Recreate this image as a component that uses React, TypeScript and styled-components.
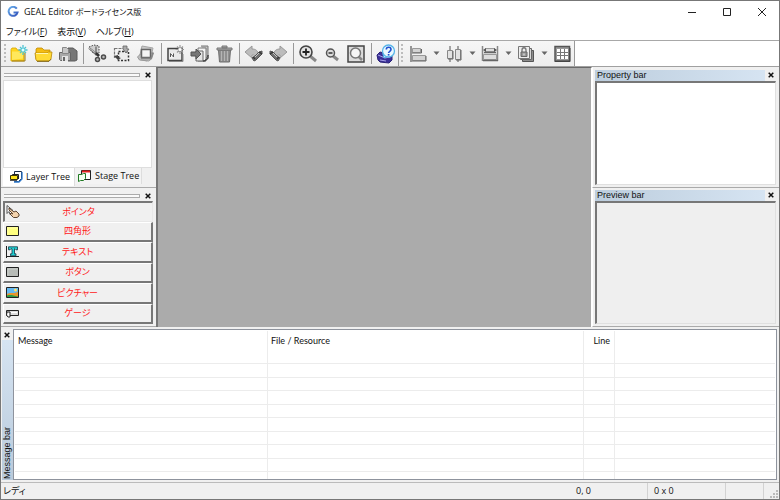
import React from "react";
import styled, { createGlobalStyle, css } from "styled-components";

const ui = `"Open Sans", "Noto Sans CJK JP", sans-serif`;
const caption = `"Liberation Sans", "Noto Sans CJK JP", sans-serif`;
const list = `Lato, "Noto Sans CJK JP", sans-serif`;

const GlobalStyle = createGlobalStyle`
  * { box-sizing: border-box; }
  body { margin: 0; background: #fff; }
  button { margin: 0; padding: 0; border: 0; background: none; color: inherit; font: inherit; }
  svg { display: block; flex: none; }
`;

const Frame = styled.div`
  display: flex;
  flex-direction: column;
  height: 100vh;
  border: 1px solid #777;
  background: #f0f0f0;
  color: #111;
  font-family: ${ui};
  font-size: 9px;
  line-height: 14px;
  font-feature-settings: "palt";
  overflow: hidden;
`;

const TitleBar = styled.header`
  display: flex;
  align-items: center;
  height: 22px;
  padding-left: 6px;
  gap: 5px;
  background: #fff;
`;

const Title = styled.h1`
  flex: 1;
  margin: 0;
  font-size: 9px;
  font-weight: 400;
`;

const Kana = styled.span`
  font-size: 8px;
`;

const ControlGroup = styled.div`
  display: flex;
`;

const WindowButton = styled.button`
  display: grid;
  place-items: center;
  width: 35px;
  height: 22px;
`;

const MenuBar = styled.nav`
  display: flex;
  gap: 10px;
  height: 18px;
  padding-left: 5px;
  background: #fff;
  border-bottom: 1px solid #a8a8a8;
`;

const MenuItem = styled.button`
  height: 17px;
`;

const ToolRow = styled.div`
  display: flex;
  height: 26px;
  background: #fff;
  border-bottom: 1px solid #a0a0a0;
`;

const ToolBar = styled.div`
  display: flex;
  align-items: center;
  padding-left: 7px;
  background: linear-gradient(#f6f6f6, #ededed);
  border-right: 1px solid #999;

  & + & { padding-left: 0; }
`;

const Grip = styled.span`
  width: 2px;
  height: 20px;
  margin: 0 3px 0 2px;
  background: repeating-linear-gradient(#bcbcbc 0 2px, transparent 2px 4px);
`;

const FirstGrip = styled(Grip)`
  margin: 0 2px 0 -4px;
`;

const ToolButton = styled.button`
  display: grid;
  place-items: center;
  width: 24px;
  height: 24px;
`;

const DropButton = styled(ToolButton)`
  width: 12px;
`;

const Separator = styled.span`
  width: 6px;
  height: 21px;
  background: linear-gradient(#999, #999) center / 1px 100% no-repeat;
`;

const Workspace = styled.div`
  display: grid;
  grid-template-columns: 155px 1fr 187px;
  flex: 1;
  min-height: 0;
`;

const Column = styled.aside`
  display: flex;
  flex-direction: column;
  min-height: 0;
`;

const Canvas = styled.main`
  background: #ababab;
  border-top: 1px solid #696969;
  border-left: 2px solid #777;
  border-right: 1px solid #fff;
`;

const LeftPane = styled.section<{ $grow?: boolean }>`
  display: flex;
  flex-direction: column;
  padding: 2px 3px 1px 2px;
  border-bottom: 1px solid #aaa;
  ${(p) => (p.$grow ? css`flex: 1; min-height: 0;` : css`height: 121px;`)}
`;

const GripHeader = styled.div`
  display: flex;
  align-items: center;
  gap: 2px;
  height: 11px;
`;

const DragBar = styled.span`
  flex: 1;
  height: 4px;
  margin-left: 1px;
  border: 1px solid #ababab;
  border-left: 0;
  background: #fafafa;
`;

const CloseButton = styled.button`
  display: grid;
  place-items: center;
  width: 11px;
  height: 11px;
`;

const TreeBox = styled.div`
  flex: 1;
  margin-right: 1px;
  background: #fff;
  border: 1px solid #dedede;
`;

const Tabs = styled.div`
  display: flex;
  align-items: flex-start;
`;

const Tab = styled.button<{ $active?: boolean }>`
  display: flex;
  align-items: center;
  gap: 3px;
  height: ${(p) => (p.$active ? 18 : 16)}px;
  padding: 0 ${(p) => (p.$active ? 4 : 2)}px 0 ${(p) => (p.$active ? 6 : 3)}px;
  background: ${(p) => (p.$active ? "#fff" : "#f3f3f3")};
  border-right: 1px solid #ddd;
  white-space: nowrap;
`;

const PartList = styled.div`
  display: flex;
  flex-direction: column;
  flex: 1;
  padding-bottom: 1px;
`;

const PartButton = styled.button<{ $pressed?: boolean }>`
  display: grid;
  grid-template-columns: 20px 1fr 20px;
  align-items: center;
  justify-items: center;
  flex: 1;
  min-height: 0;
  color: #ff1818;
  border-style: solid;
  border-width: ${(p) => (p.$pressed ? "2px 1px 1px 2px" : "1px 2px 2px 1px")};
  border-color: ${(p) => (p.$pressed ? "#777 #e8e8e8 #e8e8e8 #777" : "#fff #777 #777 #fff")};
  background: #f0f0f0;

  svg {
    justify-self: start;
    margin-left: ${(p) => (p.$pressed ? 1 : 2)}px;
  }
`;

const DockPane = styled.section<{ $line?: boolean }>`
  display: flex;
  flex-direction: column;
  padding: 1px 3px 2px 2px;
  border-top: 1px solid ${(p) => (p.$line ? "#aaa" : "#f0f0f0")};
  border-left: 1px solid #fff;
  ${(p) => (p.$line ? css`flex: 1; min-height: 0; border-bottom: 1px solid #aaa;` : css`height: 120px;`)}
`;

const DockHeader = styled.div`
  display: flex;
  align-items: center;
  height: 12px;
`;

const DockTitle = styled.h2`
  flex: 1;
  margin: 0;
  padding-left: 2px;
  background: linear-gradient(90deg, #bccddd, #d6e4f2);
  font-family: ${caption};
  font-size: 9px;
  font-weight: 400;
  line-height: 11px;
`;

const DockBody = styled.div<{ $white?: boolean }>`
  flex: 1;
  background: ${(p) => (p.$white ? "#fff" : "#efefef")};
  border-style: solid;
  border-width: 2px 1px 1px 2px;
  border-color: #777 #e0e0e0 #e0e0e0 #777;
`;

const MessagePane = styled.section`
  display: flex;
  height: 156px;
  padding: 2px 2px 2px 0;
  border-bottom: 1px solid #bbb;
`;

const MessageSide = styled.div`
  display: flex;
  flex-direction: column;
  align-items: center;
  width: 12px;
`;

const MessageTitle = styled.h2`
  flex: 1;
  margin: 0;
  padding-top: 1px;
  background: linear-gradient(#b9cadb, #d6e4f2);
  font-family: ${caption};
  font-size: 9px;
  font-weight: 400;
  line-height: 11px;
  writing-mode: vertical-rl;
  transform: rotate(180deg);
`;

const MessageBox = styled.div`
  flex: 1;
  overflow: hidden;
  padding: 1px;
  background: #fff;
  border: 1px solid #8e939d;
`;

const MessageTable = styled.table`
  width: 100%;
  table-layout: fixed;
  border-spacing: 0;
  font-family: ${list};
  font-size: 9px;
  line-height: 12px;

  th, td {
    padding: 0 4px 0 3px;
    border-right: 1px solid #ececec;
    font-weight: 400;
    text-align: left;
  }
  th { height: 20px; }
  td { height: 14px; border-bottom: 1px solid #ececec; }
  tbody tr:nth-child(odd) td { height: 13px; }
  th:nth-child(3) { text-align: right; }
  th:last-child, td:last-child { border-right: 0; }
`;

const Col = styled.col<{ $w?: number }>`
  width: ${(p) => (p.$w ? `${p.$w}px` : "auto")};
`;

const StatusBar = styled.footer`
  display: flex;
  align-items: stretch;
  height: 16px;
  line-height: 16px;
`;

const StatusCell = styled.span<{ $w?: number }>`
  ${(p) => (p.$w ? css`width: ${p.$w}px;` : css`flex: 1;`)}
  padding-left: ${(p) => (p.$w ? 6 : 2)}px;
  border-right: ${(p) => (p.$w ? "1px solid #d2d2d2" : "0")};
`;

const ResizeGrip = styled.span`
  display: flex;
  align-items: flex-end;
  justify-content: flex-end;
  width: 15px;
  padding: 1px;
`;

const S = ({ children, size = 20 }: { children: React.ReactNode; size?: number }) => (
  <svg width={size} height={size} viewBox={`0 0 ${size} ${size}`} aria-hidden="true">{children}</svg>
);

const CloseMark = () => (
  <svg width="6" height="6" viewBox="0 0 6 6" aria-hidden="true">
    <path d="M.7.7 5.3 5.3M5.3.7.7 5.3" stroke="#111" strokeWidth="1.5" />
  </svg>
);

const NewIcon = () => (
  <S>
    <path d="M1 5.500 2 4h4l1.500 2H14v11H1z" fill="#ffd51f" stroke="#d7a400" strokeWidth=".8" />
    <path d="M2 7.500h11v7L2 16z" fill="#ffe85c" />
    <path d="M2 17h13V9" stroke="#9c7b1c" fill="none" />
    <path d="M13 1v10M8.500 6h9M10 3l6 6M16 3l-6 6" stroke="#4cc3d3" strokeWidth="1.300" />
    <circle cx="13" cy="6" r="1.500" fill="#e3ffff" />
  </S>
);

const OpenIcon = () => (
  <S>
    <path d="M2 15V5l1-1h5l2 2h6v4" fill="#f4bd12" stroke="#c18c08" strokeWidth=".8" />
    <path d="M1 9h12l1.500-1H18l-1 7-2 2H3l-1-1z" fill="#ffdb35" stroke="#b98809" strokeWidth=".8" />
    <path d="M2 9.500h12" stroke="#fff6b0" fill="none" />
    <path d="M3 17.300h12l2-2" stroke="#7d6316" fill="none" />
  </S>
);

const SaveAllIcon = () => (
  <S>
    <path d="M10 4h5l4 3v9l-2 1h-7z" fill="#777" stroke="#5c5c5c" />
    <path d="M1.500 8.500h11v8h-10l-1-1z" fill="#a9a9a9" stroke="#666" />
    <path d="M4.500 3.500h4l2 2v4h-6z" fill="#c8c8c8" stroke="#888" />
    <path d="M4 12h6v5H4z" fill="#e4e4e4" />
    <path d="M5 13h2v4H5z" fill="#666" />
  </S>
);

const CutIcon = () => (
  <S>
    <path d="m1 3 5-2 5 1v7l-3 2-4-3z" fill="#d0d0d0" stroke="#444" strokeDasharray="1.500 1.200" />
    <path d="m1 4 10 8" stroke="#666" strokeWidth="2" />
    <path d="m1 4 8 6" stroke="#e8e8e8" strokeWidth=".8" />
    <path d="M8 2.500v9" stroke="#666" strokeWidth="1.300" />
    <path d="m8 9 3 3" stroke="#333" strokeWidth="2.500" />
    <circle cx="9.500" cy="15.500" r="2" fill="#bbb" stroke="#4c4c4c" strokeWidth="1.500" />
    <circle cx="15.500" cy="13" r="2" fill="#bbb" stroke="#4c4c4c" strokeWidth="1.500" />
  </S>
);

const CopyIcon = () => (
  <S>
    <path d="M2.500 4.500h10v9h-10z" fill="#f4f4f4" stroke="#777" strokeWidth="1.200" strokeDasharray="3 1" />
    <path d="M6.500 7.500h10v9h-10z" fill="#ececec" stroke="#333" strokeWidth="1.500" strokeDasharray="2 1.500" />
    <path d="M11 2h4v3h2l-3 4-3-4z" fill="#aaa" stroke="#666" strokeWidth=".8" />
    <path d="m2 12 4-1v2l3 1-3 2z" fill="#444" />
  </S>
);

const PasteIcon = () => (
  <S>
    <path d="m6 2 11 2-2 9-4 4-8-2z" fill="#c9c9c9" stroke="#a5a5a5" />
    <path d="m1.500 13 3-3 13-1-2 6-3 2-9-1z" fill="#bdbdbd" stroke="#999" />
    <path d="M5.500 5.500h9v8h-9z" fill="#f4f4f4" stroke="#666" strokeWidth="1.500" />
    <path d="M5 14.500h10l2-6" stroke="#858585" fill="none" strokeWidth="1.500" />
  </S>
);

const StageIcon = () => (
  <S>
    <path d="M2 4.500h14v12H2z" fill="#e9e9e9" stroke="#444" strokeWidth="1.500" />
    <path d="M3 17.500h14V10" stroke="#888" fill="none" />
    <path d="M4 9.500h3v4H4z" fill="#fff" />
    <path d="M4.500 13V9.500l3 3.500V9.500" stroke="#555" fill="none" />
    <path d="M14 1v9M9.500 5.500h8.500M11 2.500l6 6M17 2.500l-6 6" stroke="#999" strokeWidth="1.200" />
    <circle cx="14" cy="5.500" r="1.500" fill="#fff" />
  </S>
);

const ImportIcon = () => (
  <S>
    <path d="M11 2h7v10l-2 2" fill="#c4c4c4" stroke="#777" />
    <path d="M8 4h8v11l-2 2H8z" fill="#f4f4f4" stroke="#777" />
    <path d="M6 7h7v10H6z" fill="#e4e4e4" stroke="#666" />
    <path d="M13 17h2l3-3v-3" stroke="#444" fill="none" strokeWidth="1.500" />
    <path d="M1 8h5V5l5 5-5 5v-3H1z" fill="#777" stroke="#555" />
  </S>
);

const TrashIcon = () => (
  <S>
    <path d="M4.500 6h12l-1 12h-10z" fill="#909090" stroke="#6c6c6c" />
    <path d="M3 4h15v2H3zM8 2h5v2H8z" fill="#aaa" stroke="#777" />
    <path d="M7.500 7v10M10.500 7v10M13.500 7v10" stroke="#b5b5b5" />
  </S>
);

const UndoIcon = ({ redo = false }: { redo?: boolean }) => (
  <S>
    <g transform={redo ? "translate(20 0) scale(-1 1)" : undefined}>
      <path d="m1 8 7-6v3c4 0 6 2 6 5l-3 3c0-2-1-2-3-2v3z" fill="#bcbcbc" stroke="#999" />
      <path d="m8 14 2 3 2-1 6-6V7l-3 1-4 4z" fill="#707070" stroke="#555" />
      <path d="m9 13 2 2M15 8l3 2" stroke="#333" strokeWidth="1.300" />
      <path d="m11 13 4-4" stroke="#c5c5c5" />
    </g>
  </S>
);

const ZoomIcon = ({ small = false }: { small?: boolean }) => (
  <S>
    {small ? (
      <>
        <path d="m11 12 5 4" stroke="#888" strokeWidth="3" />
        <circle cx="8.500" cy="9" r="4" fill="#ddd" stroke="#555" strokeWidth="1.500" />
        <path d="M6.500 9h4" stroke="#333" strokeWidth="1.500" />
      </>
    ) : (
      <>
        <path d="m12 12 6 5" stroke="#888" strokeWidth="3" />
        <circle cx="8" cy="8" r="6" fill="#e3e3e3" stroke="#444" strokeWidth="1.600" />
        <path d="M4.500 8h7M8 4.500v7" stroke="#222" strokeWidth="1.800" />
      </>
    )}
  </S>
);

const FitIcon = () => (
  <S>
    <path d="M2 2h16v16H2z" fill="#dcdcdc" stroke="#444" strokeWidth="1.500" />
    <path d="m12 12 4 4" stroke="#888" strokeWidth="2.500" />
    <circle cx="9.500" cy="9" r="5" fill="#f6f6f6" stroke="#777" strokeWidth="1.500" />
  </S>
);

const HelpIcon = () => (
  <S>
    <path d="m1 11 3-3 4 1 8 3v4l-3 3-9-1-2-2z" fill="#3a2f98" stroke="#2b2378" />
    <path d="m2 11 7 3 5-1M4 16l6 1" stroke="#a9a3e8" fill="none" />
    <path d="m7 10 1 4 4-2z" fill="#eefaff" stroke="#4aaee4" />
    <circle cx="12.500" cy="7" r="6" fill="#eaf8ff" stroke="#57b5e8" strokeWidth="1.300" />
    <path d="M10.300 5.500c0-3 4.700-3 4.700 0 0 1.800-2.400 1.800-2.400 3.500" fill="none" stroke="#1f4fd0" strokeWidth="1.600" />
    <path d="M12.600 10v1.600" stroke="#1f4fd0" strokeWidth="1.700" />
  </S>
);

const AlignIcon = () => (
  <S>
    <path d="M3 2v16" stroke="#777" strokeWidth="1.500" />
    <path d="M4.500 4.500h8v4h-8zM4.500 11.500h13v5h-13z" fill="#d3d3d3" stroke="#999" />
    <path d="M4 9h9.500V5M4 17h14v-5" stroke="#666" fill="none" />
  </S>
);

const SpaceIcon = () => (
  <S>
    <path d="M6 2v16M14 2v16" stroke="#888" strokeWidth="1.500" />
    <path d="M3.500 6.500h5v8h-5zM11.500 5.500h5v10h-5z" fill="#e2e2e2" stroke="#888" />
    <path d="M9 7v8H4M17 6v10h-5" fill="none" stroke="#666" />
  </S>
);

const SizeIcon = () => (
  <S>
    <path d="M2.500 2v15M17.500 2v15" stroke="#888" strokeWidth="1.500" />
    <path d="M5.500 4.500h9v3h-9zM3.500 10.500h13v5h-13z" fill="#dedede" stroke="#999" />
    <path d="M4 8.500h12M3 16.500h15" stroke="#666" strokeWidth="1.300" />
    <path d="m3 6 3-2v4zM17 6l-3-2v4z" fill="#555" />
  </S>
);

const LockIcon = () => (
  <S>
    <path d="M6.500 6.500h11v11h-11z" fill="#8c8c8c" stroke="#555" />
    <path d="M4.500 4.500h11v11h-11z" fill="#d8d8d8" stroke="#666" />
    <path d="M2.500 2.500h11v12h-11z" fill="#eee" stroke="#777" />
    <path d="M6 8V6c0-3 4-3 4 0v2" fill="none" stroke="#777" strokeWidth="1.300" />
    <path d="M5 8h6v4.500H5z" fill="#999" stroke="#666" />
    <path d="M8 9.500v2" stroke="#eee" />
  </S>
);

const GridIcon = () => (
  <S>
    <path d="M3 2.500h14.500V17H3z" fill="#999" stroke="#555" strokeWidth="1.500" />
    <path d="M5 5h11v10H5z" fill="#fff" />
    <path d="M8.500 5v10M12.500 5v10M5 8.500h11M5 11.500h11" stroke="#777" />
    <path d="M3 17.500h15V4" stroke="#444" fill="none" />
  </S>
);

const Arrow = () => (
  <svg width="7" height="5" viewBox="0 0 7 5" aria-hidden="true"><path d="M.5.5h6l-3 3.500z" fill="#666" /></svg>
);

const groups: [string, React.ReactNode][][] = [
  [["新規", <NewIcon />], ["開く", <OpenIcon />], ["保存", <SaveAllIcon />]],
  [["切り取り", <CutIcon />], ["コピー", <CopyIcon />], ["貼り付け", <PasteIcon />]],
  [["ステージ追加", <StageIcon />], ["インポート", <ImportIcon />], ["削除", <TrashIcon />]],
  [["元に戻す", <UndoIcon />], ["やり直し", <UndoIcon redo />]],
  [["拡大", <ZoomIcon />], ["縮小", <ZoomIcon small />], ["全体表示", <FitIcon />]],
  [["ヘルプ", <HelpIcon />]],
];

const layoutTools: [string, React.ReactNode][] = [
  ["整列", <AlignIcon />], ["間隔", <SpaceIcon />], ["サイズ", <SizeIcon />], ["ロック", <LockIcon />],
];

const LayerIcon = () => (
  <svg width="14" height="12" viewBox="0 0 14 12" aria-hidden="true">
    <path d="M5.500.500h7v7l-3 3h-4z" fill="#fff" stroke="#1b2d4a" />
    <path d="M13 1v7l-3 3H5" stroke="#2d78cb" fill="none" strokeWidth="1.300" />
    <path d="M3.500 5V3.500h6V8" fill="#d7e8f5" stroke="#222" />
    <path d="M1.500 4.500h7v4h-7z" fill="#ffe51c" stroke="#3b3508" />
    <path d="M1 9.500h7" stroke="#555" />
  </svg>
);

const StageTreeIcon = () => (
  <svg width="14" height="12" viewBox="0 0 14 12" aria-hidden="true">
    <path d="M3.500.500h9v9h-9z" fill="#fff" stroke="#222" />
    <path d="M4 1.500h8" stroke="#e42020" strokeWidth="2" />
    <path d="M.500 4.500h3l2-1h2v5l-2 2h-3l-2 1z" fill="#f3fff0" stroke="#217a24" />
  </svg>
);

const PointerIcon = () => (
  <svg width="14" height="13" viewBox="0 0 14 13" aria-hidden="true">
    <path d="M1 .500v8l2-2 1 3 2-1-1-3h2z" fill="#fff" stroke="#555" />
    <path d="m3 3 5 4 2-1 3 3v2l-2 1.500H7.500L4 9l1-1 2 1-4-4z" fill="#f4d3ad" stroke="#5c4330" />
  </svg>
);

const RectIcon = ({ fill }: { fill: string }) => (
  <svg width="14" height="11" viewBox="0 0 14 11" aria-hidden="true">
    <path d="M.500.500h12v9h-12z" fill={fill} stroke="#222" />
    <path d="M2 8.500V2h10" stroke="#fff" strokeOpacity=".3" fill="none" />
  </svg>
);

const TextIcon = () => (
  <svg width="14" height="12" viewBox="0 0 14 12" aria-hidden="true">
    <path d="M.500 0v12M0 10.500h13" stroke="#222" />
    <path d="M2.500.800h9v3h-1.500l-1-1H8.500v5H10v2H4.500v-2H6v-5H5l-1 1H2.500z" fill="#20d0d2" stroke="#134" strokeWidth=".8" />
  </svg>
);

const PictureIcon = () => (
  <svg width="14" height="12" viewBox="0 0 14 12" aria-hidden="true">
    <path d="M.500.500h12v10h-12z" fill="#64b9f2" stroke="#222" />
    <path d="M1 7c3-2 6 0 11-2v5H1z" fill="#e8952c" />
    <path d="M1 8.500c4-1 6 0 11 1v.5H1z" fill="#2a9b45" />
    <circle cx="9.500" cy="3" r="1.500" fill="#ffe36d" />
  </svg>
);

const GaugeIcon = () => (
  <svg width="14" height="9" viewBox="0 0 14 9" aria-hidden="true">
    <path d="M.500 1.500h12v5h-12z" fill="#ddd" stroke="#222" />
    <path d="M5 3.500h6" stroke="#fff" />
    <path d="M1 3h3v5H2L.500 6z" fill="#fff" stroke="#222" />
  </svg>
);

const parts: [string, React.ReactNode][] = [
  ["ポインタ", <PointerIcon />],
  ["四角形", <RectIcon fill="#ffff80" />],
  ["テキスト", <TextIcon />],
  ["ボタン", <RectIcon fill="#b6bab6" />],
  ["ピクチャー", <PictureIcon />],
  ["ゲージ", <GaugeIcon />],
];

function PaneGrip() {
  return (
    <GripHeader>
      <DragBar />
      <CloseButton aria-label="閉じる"><CloseMark /></CloseButton>
    </GripHeader>
  );
}

function Dock({ title, line, white }: { title: string; line?: boolean; white?: boolean }) {
  return (
    <DockPane $line={line}>
      <DockHeader>
        <DockTitle>{title}</DockTitle>
        <CloseButton aria-label="閉じる"><CloseMark /></CloseButton>
      </DockHeader>
      <DockBody $white={white} />
    </DockPane>
  );
}

function Controls() {
  return (
    <ControlGroup>
      <WindowButton aria-label="最小化"><S size={10}><path d="M1 5.500h8" stroke="#222" /></S></WindowButton>
      <WindowButton aria-label="最大化"><S size={10}><path d="M1.500 1.500h7v7h-7z" fill="none" stroke="#222" /></S></WindowButton>
      <WindowButton aria-label="閉じる"><S size={10}><path d="m1 1 8 8M9 1 1 9" stroke="#222" /></S></WindowButton>
    </ControlGroup>
  );
}

export default function App() {
  return (
    <Frame>
      <GlobalStyle />
      <TitleBar>
        <svg width="12" height="12" viewBox="0 0 12 12" aria-hidden="true">
          <defs>
            <linearGradient id="logo" x1="0" y1="0" x2="1" y2="1">
              <stop offset="0" stopColor="#69b0ec" /><stop offset="1" stopColor="#3152ba" />
            </linearGradient>
          </defs>
          <path d="M9.800 2.700A4.500 4.500 0 1 0 10.500 6.500H6.500" fill="none" stroke="url(#logo)" strokeWidth="2" />
        </svg>
        <Title>GEAL Editor <Kana>ボードライセンス版</Kana></Title>
        <Controls />
      </TitleBar>
      <MenuBar>
        <MenuItem>ファイル(<u>F</u>)</MenuItem>
        <MenuItem>表示(<u>V</u>)</MenuItem>
        <MenuItem>ヘルプ(<u>H</u>)</MenuItem>
      </MenuBar>
      <ToolRow>
        <ToolBar role="toolbar">
          <FirstGrip />
          {groups.map((group, i) => (
            <React.Fragment key={i}>
              {i > 0 && <Separator />}
              {group.map(([label, icon]) => <ToolButton key={label} aria-label={label}>{icon}</ToolButton>)}
            </React.Fragment>
          ))}
        </ToolBar>
        <ToolBar role="toolbar">
          <Grip />
          {layoutTools.map(([label, icon]) => (
            <React.Fragment key={label}>
              <ToolButton aria-label={label}>{icon}</ToolButton>
              <DropButton aria-label={`${label}メニュー`}><Arrow /></DropButton>
            </React.Fragment>
          ))}
          <ToolButton aria-label="グリッド"><GridIcon /></ToolButton>
        </ToolBar>
      </ToolRow>
      <Workspace>
        <Column>
          <LeftPane>
            <PaneGrip />
            <TreeBox />
            <Tabs role="tablist">
              <Tab role="tab" aria-selected="true" $active><LayerIcon />Layer Tree</Tab>
              <Tab role="tab" aria-selected="false"><StageTreeIcon />Stage Tree</Tab>
            </Tabs>
          </LeftPane>
          <LeftPane $grow>
            <PaneGrip />
            <PartList>
              {parts.map(([label, icon], i) => (
                <PartButton key={label} $pressed={i === 0}>{icon}<span>{label}</span></PartButton>
              ))}
            </PartList>
          </LeftPane>
        </Column>
        <Canvas />
        <Column>
          <Dock title="Property bar" white />
          <Dock title="Preview bar" line />
        </Column>
      </Workspace>
      <MessagePane>
        <MessageSide>
          <CloseButton aria-label="閉じる"><CloseMark /></CloseButton>
          <MessageTitle>Message bar</MessageTitle>
        </MessageSide>
        <MessageBox>
          <MessageTable>
            <colgroup><Col $w={253} /><Col $w={316} /><Col $w={31} /><Col /></colgroup>
            <thead><tr><th>Message</th><th>File / Resource</th><th>Line</th><th /></tr></thead>
            <tbody>
              {Array.from({ length: 10 }, (_, r) => <tr key={r}><td /><td /><td /><td /></tr>)}
            </tbody>
          </MessageTable>
        </MessageBox>
      </MessagePane>
      <StatusBar>
        <StatusCell>レディ</StatusCell>
        <StatusCell $w={78}>0, 0</StatusCell>
        <StatusCell $w={78}>0 x 0</StatusCell>
        <StatusCell $w={38} />
        <ResizeGrip>
          <svg width="8" height="8" viewBox="0 0 8 8" aria-hidden="true">
            <path d="M6 0h2v2H6zM3 3h2v2H3zM6 3h2v2H6zM0 6h2v2H0zM3 6h2v2H3zM6 6h2v2H6z" fill="#bbb" />
          </svg>
        </ResizeGrip>
      </StatusBar>
    </Frame>
  );
}
